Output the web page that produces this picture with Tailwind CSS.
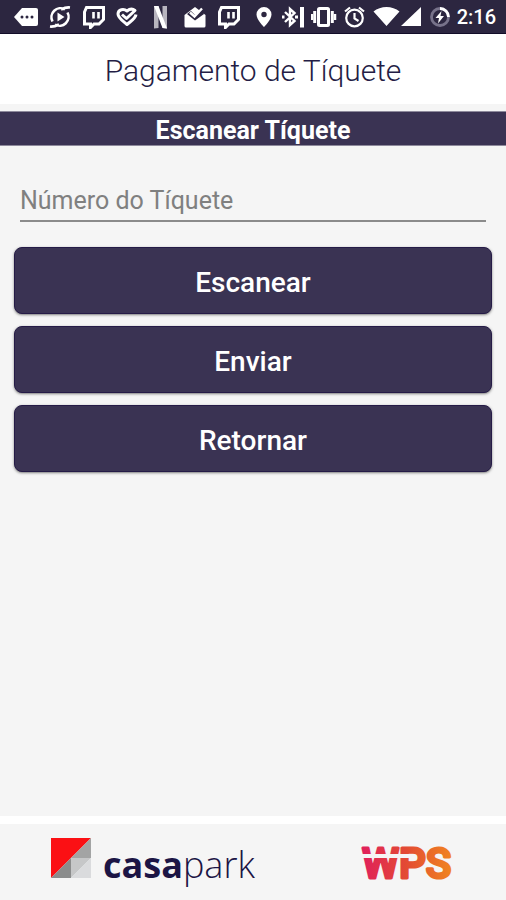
<!DOCTYPE html>
<html lang="pt-BR">
<head>
    <meta charset="UTF-8">
    <meta name="viewport" content="width=device-width, initial-scale=1.0">
    <title>Pagamento de Tíquete</title>
    <script src="https://cdn.jsdelivr.net/npm/@tailwindcss/browser@4"></script>
</head>
<body class="bg-[#f5f5f5] font-[Roboto,sans-serif]">
    <div class="min-h-screen flex flex-col">
        <!-- Status bar -->
        <div class="h-[34px] bg-[#2c2640] border-b border-[#120c28] flex items-center pt-px pl-[14px] pr-[10px] text-white">
            <div class="flex-1 flex items-center justify-between pr-3">
                <svg class="w-6 h-6" viewBox="0 0 24 24" fill="currentColor"><path d="M7 3h14a2 2 0 0 1 2 2v14a2 2 0 0 1-2 2H7l-8-9z" transform="translate(1 0)"/><g fill="#2c2640"><circle cx="8" cy="12" r="1.5"/><circle cx="13" cy="12" r="1.5"/><circle cx="18" cy="12" r="1.5"/></g></svg>
                <svg class="w-6 h-6" viewBox="0 0 24 24" fill="none" stroke="currentColor" stroke-width="2.6"><path d="M19.500 7.500A9 9 0 0 1 7 19.500M4.500 16.500A9 9 0 0 1 17 4.500M2 21.500c4 .5 7-1 9-2M22 2.500c-4-.5-7 1-9 2"/><path d="M9.500 7.500v9l7-4.500z" fill="currentColor" stroke="none"/></svg>
                <svg class="w-6 h-6" viewBox="0 0 24 24" fill="none" stroke="currentColor" stroke-width="3"><path d="M4.500 2.500h17v12l-4.500 4.500h-5l-3.500 3.500V19H2.500V7z"/><path d="M11.500 7v6.500M16.500 7v6.500" stroke-width="2.600"/></svg>
                <svg class="w-6 h-6" viewBox="0 0 24 24" fill="none" stroke="currentColor" stroke-width="3" stroke-linejoin="round"><path d="M7 9.500l4.500 4 8.500-8c-2.500-2-5.500-1.500-8 .5C9 3.500 3 4 3 9c0 4 5 7 9 10.500 4-3.500 8.500-6 9-10"/></svg>
                <svg class="w-6 h-6" viewBox="0 0 24 24"><path d="M5 1h4.500v22l-4.500.5zM13.500 1H18v22.500l-4.500-.5z" fill="#b8b5bf"/><path d="M5 1h4.500L18 23.500l-4.500-.5z" fill="#fff"/></svg>
                <svg class="w-6 h-6" viewBox="0 0 24 24" fill="currentColor"><path d="M1.500 10L12 2l10.500 8v11a1.500 1.500 0 0 1-1.500 1.500H3A1.500 1.500 0 0 1 1.500 21z"/><path d="M4 9l4-3 4 4 7-6 2 5-9 6.500z" fill="#2c2640"/><path d="M7 7.500l4.500 4 7.500-8" fill="none" stroke="currentColor" stroke-width="2.400"/></svg>
                <svg class="w-6 h-6" viewBox="0 0 24 24" fill="none" stroke="currentColor" stroke-width="3"><path d="M4.500 2.500h17v12l-4.500 4.500h-5l-3.500 3.500V19H2.500V7z"/><path d="M11.500 7v6.500M16.500 7v6.500" stroke-width="2.600"/></svg>
            </div>
            <div class="flex items-center gap-[5px]">
                <svg class="w-6 h-6" viewBox="0 0 24 24" fill="currentColor"><path fill-rule="evenodd" d="M11 2a7.500 7.500 0 0 0-7.500 7.500C3.500 15 11 22 11 22s7.500-7 7.500-12.500A7.500 7.500 0 0 0 11 2zm0 4.800a2.700 2.700 0 1 1 0 5.400 2.700 2.700 0 0 1 0-5.400z"/></svg>
                <svg class="w-6 h-6" viewBox="0 0 24 24" fill="none" stroke="currentColor" stroke-width="2.400"><path d="M3 7l9.500 9-4.500 4V4l4.500 4L3 17"/><path d="M1 10.500v3M14.500 10.500v3" stroke-width="3"/><path d="M20 2v20.500" stroke-width="4"/></svg>
                <svg class="w-7 h-6" viewBox="0 0 28 24" fill="none" stroke="currentColor"><rect x="7.500" y="3.500" width="10" height="17" rx="1" stroke-width="3"/><path d="M3.700 6v12M21.300 6v12" stroke-width="3"/><path d="M1 9v6M24 9v6" stroke-width="2.500"/></svg>
                <svg class="w-6 h-6" viewBox="0 0 24 24" fill="none" stroke="currentColor" stroke-width="2.200"><circle cx="10.500" cy="13" r="8.300"/><path d="M10.500 8v5.500l4 2.500M1 6.500l5-4M20 6.500l-5-4"/></svg>
                <svg class="w-[50px] h-6" viewBox="0 0 50 24" fill="currentColor"><path d="M13.500 21L.5 6.500c7-6 19-6 26 0zM48 2v19H28z"/></svg>
                <svg class="w-6 h-6" viewBox="0 0 24 24" fill="none" stroke-width="2.800"><circle cx="12" cy="12" r="8.500" stroke="#77728a"/><path d="M12 3.500A8.500 8.500 0 0 1 20.500 12" stroke="#fff"/><path d="M13.500 6l-6 7H11l-1 5.500 6-7.500h-3.500z" fill="#fff"/></svg>
                <span class="text-xl font-medium leading-6">2:16</span>
            </div>
        </div>

        <!-- Header -->
        <header>
            <h1 class="h-[70px] bg-white flex items-center justify-center pt-[3px] text-[30px] leading-9 font-light text-[#241d45]">Pagamento de Tíquete</h1>
            <h2 class="mt-[7px] h-[35px] bg-[#3a3353] border-y border-[#8e8a9c] flex items-center justify-center pt-1 text-[25px] leading-8 font-bold text-white">Escanear Tíquete</h2>
        </header>

        <!-- Ticket form -->
        <main class="flex-1 px-[14px] pt-[34px]">
            <form class="flex flex-col gap-3">
                <div class="px-[6px] pb-[13px]">
                    <label for="ticket" class="sr-only">Número do Tíquete</label>
                    <input id="ticket" type="text" placeholder="Número do Tíquete" class="block w-full h-[42px] border-b-2 border-[#8b8b8b] text-[25px] leading-10 text-[#241d45] placeholder:text-[#808080] outline-none">
                </div>
                <button type="button" class="h-[67px] pt-1 rounded-lg bg-[#3a3353] border border-[#251b47] shadow-sm shadow-black/40 text-[28px] font-medium text-white">Escanear</button>
                <button type="submit" class="h-[67px] pt-1 rounded-lg bg-[#3a3353] border border-[#251b47] shadow-sm shadow-black/40 text-[28px] font-medium text-white">Enviar</button>
                <button type="button" class="h-[67px] pt-1 rounded-lg bg-[#3a3353] border border-[#251b47] shadow-sm shadow-black/40 text-[28px] font-medium text-white">Retornar</button>
            </form>
        </main>

        <!-- Footer logos -->
        <footer class="h-[84px] border-t-8 border-white flex items-center justify-between pl-[51px] pr-[55px]">
            <div class="flex items-start gap-3">
                <svg class="w-10 h-10" viewBox="0 0 40 40">
                    <path d="M0 0h40L0 40z" fill="#fb1014"/>
                    <path d="M40 0v20H20z" fill="#a3a4a4"/>
                    <path d="M20 20v20H0z" fill="#8b8c8c"/>
                    <path d="M20 20h20L20 40z" fill="#c6c7c8"/>
                    <path d="M40 20v20H20z" fill="#dadbdd"/>
                </svg>
                <p class="pt-[5px] text-[36px] leading-[44px] font-['Open_Sans',sans-serif] text-[#1c1545]"><span class="font-bold">casa</span><span class="font-light">park</span></p>
            </div>
            <svg class="w-[90px] h-10 overflow-visible" viewBox="0 0 90 40" role="img" aria-label="WPS">
                <defs>
                    <linearGradient id="wps" x1="0" y1="0" x2="90" y2="0" gradientUnits="userSpaceOnUse">
                        <stop offset="0" stop-color="#e01f5c"/>
                        <stop offset=".5" stop-color="#e34a33"/>
                        <stop offset="1" stop-color="#f08420"/>
                    </linearGradient>
                </defs>
                <text x="1" y="36" font-family="Roboto, sans-serif" font-size="42" font-weight="500" fill="url(#wps)" stroke="url(#wps)" stroke-width="3" stroke-linejoin="round">WPS</text>
                <path d="M-2 14h53" stroke="#f5f5f5" stroke-width="4"/>
            </svg>
        </footer>
    </div>
</body>
</html>
